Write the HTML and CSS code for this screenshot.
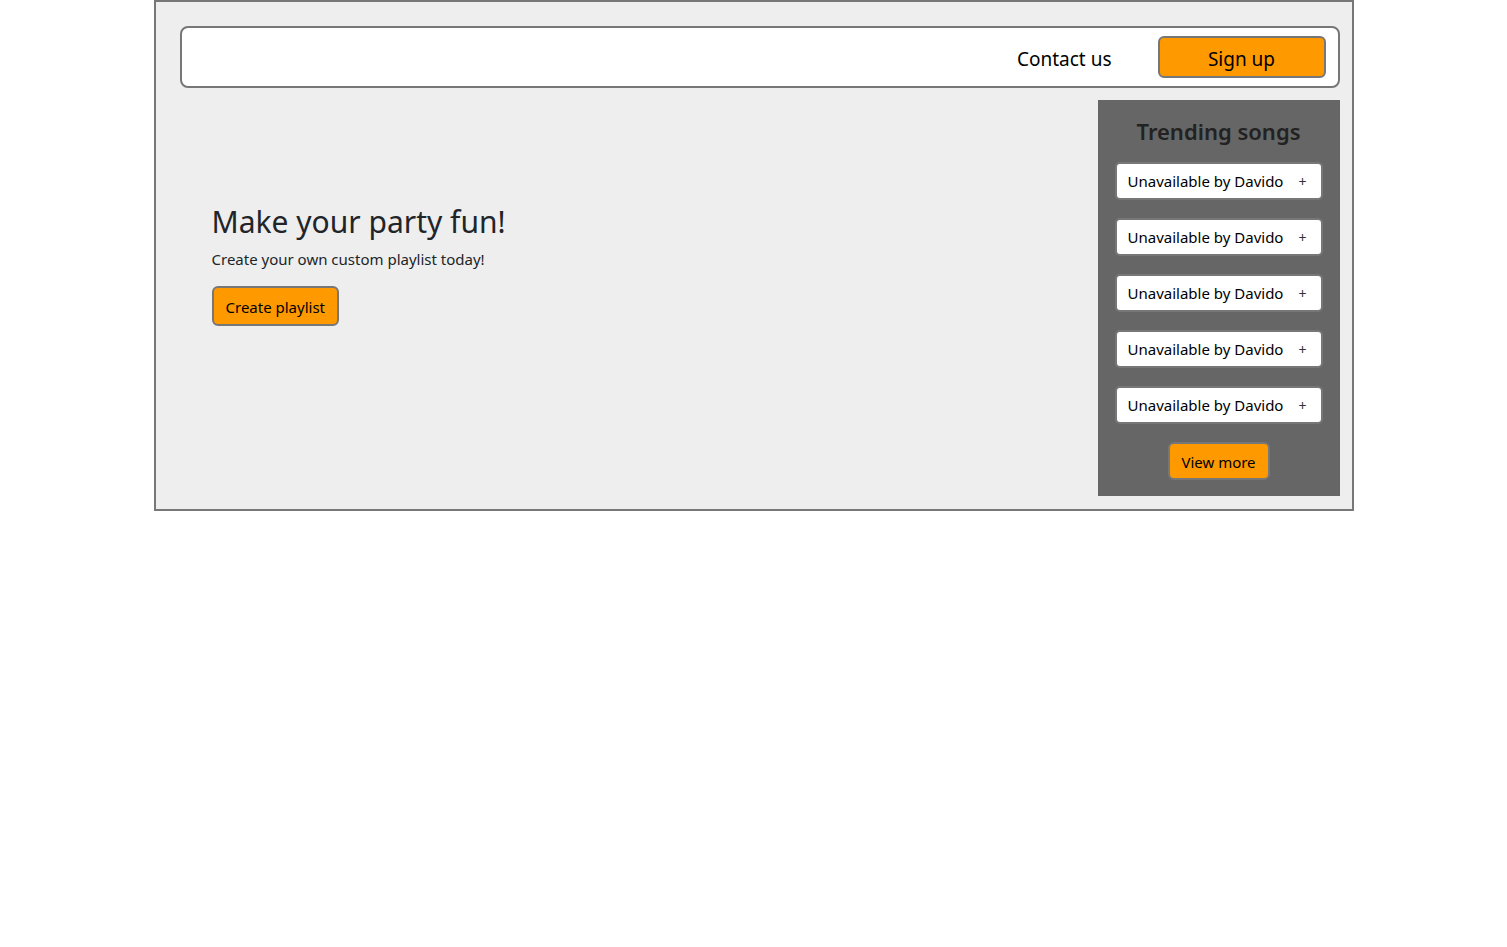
FILE: index.html
```html
<!DOCTYPE html>
<html lang="en">
<head>
<meta charset="utf-8">
<title>Party playlist</title>
<link rel="stylesheet" href="styles.css">
</head>
<body>
<div class="page">
  <nav class="navbar">
    <a class="nav-link" href="#">Contact us</a>
    <button class="btn btn-signup">Sign up</button>
  </nav>
  <div class="main">
    <section class="hero">
      <h1 class="hero-title">Make your party fun!</h1>
      <p class="hero-sub">Create your own custom playlist today!</p>
      <button class="btn btn-create">Create playlist</button>
    </section>
    <aside class="sidebar">
      <h2 class="sidebar-title">Trending songs</h2>
      <ul class="songs">
        <li class="song"><span>Unavailable by Davido</span><span class="plus">+</span></li>
        <li class="song"><span>Unavailable by Davido</span><span class="plus">+</span></li>
        <li class="song"><span>Unavailable by Davido</span><span class="plus">+</span></li>
        <li class="song"><span>Unavailable by Davido</span><span class="plus">+</span></li>
        <li class="song"><span>Unavailable by Davido</span><span class="plus">+</span></li>
      </ul>
      <button class="btn btn-more">View more</button>
    </aside>
  </div>
</div>
</body>
</html>
```
FILE: styles.css
```css
* { box-sizing: border-box; }
body {
  margin: 0;
  background: #fff;
  font-family: "Noto Sans", "Open Sans", sans-serif;
  color: #212529;
}
.page {
  width: 1200px;
  margin: 0 auto;
  border: 2px solid #777;
  background: #eee;
  padding: 24px 12px 13px 24px;
}
.navbar {
  height: 62px;
  border: 2px solid #777;
  border-radius: 8px;
  background: #fff;
  display: flex;
  justify-content: flex-end;
  align-items: center;
  padding-right: 12px;
  gap: 46px;
}
.nav-link {
  color: #000;
  text-decoration: none;
  font-size: 19px;
  padding-top: 3px;
}
.btn {
  background: #ff9900;
  border: 2px solid #777;
  border-radius: 6px;
  color: #000;
  font-family: inherit;
  cursor: pointer;
}
.btn-signup {
  width: 168px;
  height: 42px;
  font-size: 19px;
  padding: 3px 0 0;
}
.main {
  display: flex;
  margin-top: 12px;
}
.hero {
  flex: 1;
  padding: 102px 0 0 32px;
}
.hero-title {
  margin: 0;
  font-weight: 400;
  font-size: 30px;
  line-height: 40px;
}
.hero-sub {
  margin: 6px 0 16px;
  font-size: 15px;
  line-height: 22px;
}
.btn-create {
  height: 40px;
  padding: 2px 12px 0;
  font-size: 15px;
}
.sidebar {
  width: 242px;
  height: 396px;
  background: #666;
  padding: 14px 17px 0;
  display: flex;
  flex-direction: column;
  align-items: center;
}
.sidebar-title {
  margin: 0 0 14px;
  font-size: 22px;
  line-height: 34px;
  font-weight: 600;
  color: #222;
}
.songs {
  list-style: none;
  margin: 0;
  padding: 0;
  width: 100%;
  display: flex;
  flex-direction: column;
  gap: 18px;
}
.song {
  height: 38px;
  background: #fff;
  border: 2px solid #777;
  border-radius: 5px;
  display: flex;
  align-items: center;
  padding: 0 0 0 11px;
  font-size: 15px;
  color: #000;
}
.plus {
  margin-left: 15px;
  color: #333;
  font-size: 14px;
}
.btn-more {
  margin-top: 18px;
  height: 38px;
  width: 102px;
  font-size: 15px;
  padding: 1px 0 0;
}
```
